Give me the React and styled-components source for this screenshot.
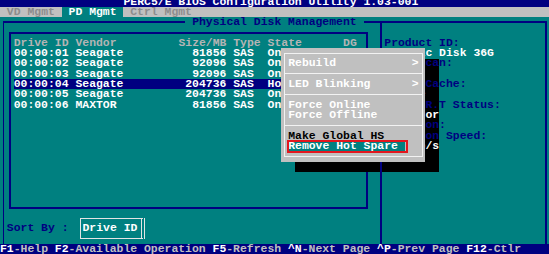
import React from "react";
import styled, { createGlobalStyle } from "styled-components";

// text-mode grid: 80 columns x 25 rows squeezed into the shot
const CW = 549 / 80;
const RH = 10.3;
const TEAL = "#008080";
const NAVY = "#000080";
const GRAY = "#c0c0c0";

const Global = createGlobalStyle`
  html, body {
    margin: 0;
    padding: 0;
    background: ${TEAL};
  }
`;

const Screen = styled.div`
  position: relative;
  width: 549px;
  height: 254px;
  overflow: hidden;
  background: ${TEAL};
  font-family: "Liberation Mono", "DejaVu Sans Mono", monospace;
  font-weight: bold;
  font-size: ${CW / 0.6}px;
  line-height: ${RH}px;
  white-space: pre;
`;

const Inner = styled.div`
  position: relative;
  margin-top: -3.3px;
  display: flex;
  flex-direction: column;
`;

const TitleBar = styled.div`
  height: ${RH}px;
  background: ${NAVY};
  color: #fff;
  padding-left: ${18 * CW}px;
`;

const TabBar = styled.div`
  height: ${RH}px;
  background: ${GRAY};
  display: flex;
`;

const Tab = styled.div`
  padding: 0 ${CW}px;
  color: ${(p) => (p.active ? "#fff" : "#8c8c8c")};
  background: ${(p) => (p.active ? TEAL : "transparent")};
`;

const Body = styled.div`
  box-sizing: border-box;
  height: ${22 * RH}px;
  padding-top: ${RH / 2 - 1}px;
  padding-left: ${CW / 2 - 0.5}px;
`;

const Frame = styled.div`
  position: relative;
  box-sizing: border-box;
  width: ${79 * CW + 1.5}px;
  height: 100%;
  border-style: solid;
  border-color: ${NAVY};
  border-width: 2px 2px 0 1px;
  display: flex;
`;

const FrameTitle = styled.div`
  position: absolute;
  left: ${27 * CW - (CW / 2 + 0.5)}px;
  top: ${-RH / 2 - 1}px;
  padding: 0 ${CW}px;
  background: ${TEAL};
  color: ${NAVY};
`;

const LeftArea = styled.div`
  width: ${55 * CW - 1.5}px;
  display: flex;
  flex-direction: column;
`;

const ListBox = styled.div`
  box-sizing: border-box;
  margin-left: ${CW - 1.5}px;
  margin-top: ${RH - 2}px;
  width: ${52 * CW + 2}px;
  height: ${17 * RH + 2}px;
  border: 2px solid ${NAVY};
  padding-top: ${RH / 2 - 1}px;
  padding-left: ${CW / 2 - 1}px;
`;

const Row = styled.div`
  width: ${51 * CW}px;
  height: ${RH}px;
  display: grid;
  grid-template-columns: ${9 * CW}px ${13 * CW}px ${9 * CW}px ${CW}px ${5 * CW}px ${11 * CW}px 1fr;
  color: ${(p) => (p.head ? "#b4b4b4" : "#fff")};
  background: ${(p) => (p.selected ? NAVY : "transparent")};
`;

const Num = styled.span`
  text-align: right;
`;

const SortRow = styled.div`
  margin-top: ${RH - 1}px;
  height: ${2 * RH}px;
  padding-left: ${CW / 2 - 0.5}px;
  display: flex;
  align-items: center;
`;

const SortLabel = styled.span`
  color: ${NAVY};
`;

const SortBox = styled.div`
  box-sizing: border-box;
  margin-left: ${1.6 * CW}px;
  width: 65px;
  height: ${2 * RH}px;
  border: 1px solid #e4e4e4;
  border-right: 4px double #e4e4e4;
  padding-left: 2px;
  color: #fff;
  display: flex;
  align-items: center;
`;

/* sits above the menu's shadow, below the menu itself */
const InfoPanel = styled.div`
  position: relative;
  z-index: 2;
  flex: 1;
  border-left: 2px solid ${NAVY};
  padding-left: ${CW / 2 - 1}px;
  padding-top: ${1.5 * RH - 1}px;
`;

const InfoLine = styled.div`
  height: ${RH}px;
  color: ${(p) => (p.value ? "#fff" : NAVY)};
`;

const StatusBar = styled.div`
  height: ${RH}px;
  background: ${NAVY};
  color: ${GRAY};
`;

const Key = styled.span`
  color: #fff;
`;

const MenuShadow = styled.div`
  position: absolute;
  z-index: 1;
  left: ${43 * CW}px;
  top: ${6 * RH}px;
  width: ${21 * CW}px;
  height: ${11 * RH}px;
  background: #000;
`;

const Menu = styled.div`
  position: absolute;
  z-index: 3;
  left: ${41 * CW}px;
  top: ${5 * RH}px;
  box-sizing: border-box;
  width: ${21 * CW}px;
  height: ${11 * RH}px;
  padding: ${RH / 2 - 0.5}px ${CW / 2 - 0.5}px;
  background: ${GRAY};
`;

const MenuFrame = styled.div`
  box-sizing: border-box;
  height: 100%;
  border: 1px solid #f2f2f2;
  padding-top: ${RH / 2 - 0.5}px;
`;

const MenuItem = styled.div`
  height: ${RH}px;
  padding: 0 ${CW / 2 - 0.5}px;
  display: flex;
  justify-content: space-between;
  color: ${(p) => (p.enabled ? "#000" : "#fff")};
`;

const Picked = styled.span`
  position: relative;
  width: ${17 * CW}px;
  background: ${TEAL};
  color: #fff;

  &::after {
    content: "";
    position: absolute;
    top: -1px;
    bottom: -2px;
    left: -1.5px;
    right: -3px;
    border: 2px solid #e3161e;
  }
`;

const Separator = styled.div`
  height: ${RH}px;
  display: flex;
  align-items: center;

  &::before {
    content: "";
    flex: 1;
    height: 1px;
    background: #f2f2f2;
  }
`;

const drives = [
  ["00:00:01", "Seagate", "81856", "SAS", "Online"],
  ["00:00:02", "Seagate", "92096", "SAS", "Online"],
  ["00:00:03", "Seagate", "92096", "SAS", "Online"],
  ["00:00:04", "Seagate", "204736", "SAS", "Hotspare"],
  ["00:00:05", "Seagate", "204736", "SAS", "Online"],
  ["00:00:06", "MAXTOR", "81856", "SAS", "Online"],
];

const info = [
  ["Product ID:"],
  ["Generic Disk 36G", true],
  ["Disk Scan:"],
  ["Off", true],
  ["Write Cache:"],
  ["Enable", true],
  ["S.M.A.R.T Status:"],
  ["No Error", true],
  ["Revision:"],
  ["Rotation Speed:"],
  ["3.0 Gb/s", true],
];

const status = [
  ["F1", "-Help "],
  ["F2", "-Available Operation "],
  ["F5", "-Refresh "],
  ["^N", "-Next Page "],
  ["^P", "-Prev Page "],
  ["F12", "-Ctlr"],
];

export default function App() {
  return (
    <Screen>
      <Global />
      <Inner>
        <TitleBar>PERC5/E BIOS Configuration Utility 1.03-001</TitleBar>
        <TabBar>
          <Tab>VD Mgmt</Tab>
          <Tab active>PD Mgmt</Tab>
          <Tab>Ctrl Mgmt</Tab>
        </TabBar>
        <Body>
          <Frame>
            <FrameTitle>Physical Disk Management</FrameTitle>
            <LeftArea>
              <ListBox>
                <Row head>
                  <span>Drive ID</span>
                  <span>Vendor</span>
                  <Num>Size/MB</Num>
                  <span />
                  <span>Type</span>
                  <span>State</span>
                  <span>DG</span>
                </Row>
                {drives.map((d) => (
                  <Row key={d[0]} selected={d[4] === "Hotspare"}>
                    <span>{d[0]}</span>
                    <span>{d[1]}</span>
                    <Num>{d[2]}</Num>
                    <span />
                    <span>{d[3]}</span>
                    <span>{d[4]}</span>
                    <span>{d[4] === "Hotspare" ? "--" : "0"}</span>
                  </Row>
                ))}
              </ListBox>
              <SortRow>
                <SortLabel>Sort By :</SortLabel>
                <SortBox>Drive ID</SortBox>
              </SortRow>
            </LeftArea>
            <InfoPanel>
              {info.map(([t, v], i) => (
                <InfoLine key={i} value={v}>
                  {t}
                </InfoLine>
              ))}
            </InfoPanel>
          </Frame>
        </Body>
        <StatusBar>
          {status.map(([k, t]) => (
            <React.Fragment key={k}>
              <Key>{k}</Key>
              {t}
            </React.Fragment>
          ))}
        </StatusBar>

        <MenuShadow />
        <Menu>
          <MenuFrame>
            <MenuItem>
              <span>Rebuild</span>
              <span>&gt;</span>
            </MenuItem>
            <Separator />
            <MenuItem>
              <span>LED Blinking</span>
              <span>&gt;</span>
            </MenuItem>
            <Separator />
            <MenuItem>Force Online</MenuItem>
            <MenuItem>Force Offline</MenuItem>
            <Separator />
            <MenuItem enabled>Make Global HS</MenuItem>
            <MenuItem>
              <Picked>Remove Hot Spare</Picked>
            </MenuItem>
          </MenuFrame>
        </Menu>
      </Inner>
    </Screen>
  );
}
